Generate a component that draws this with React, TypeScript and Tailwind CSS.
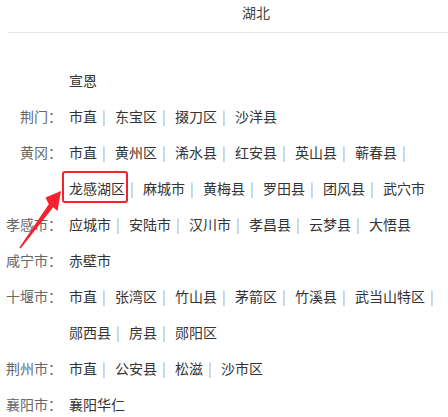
import React from "react";

type Row = { label: string; items: string[] };

const ROWS: Row[] = [
  { label: "", items: ["宣恩"] },
  { label: "荆门：", items: ["市直", "东宝区", "掇刀区", "沙洋县"] },
  {
    label: "黄冈：",
    items: ["市直", "黄州区", "浠水县", "红安县", "英山县", "蕲春县", "龙感湖区", "麻城市", "黄梅县", "罗田县", "团风县", "武穴市"],
  },
  { label: "孝感市：", items: ["应城市", "安陆市", "汉川市", "孝昌县", "云梦县", "大悟县"] },
  { label: "咸宁市：", items: ["赤壁市"] },
  {
    label: "十堰市：",
    items: ["市直", "张湾区", "竹山县", "茅箭区", "竹溪县", "武当山特区", "郧西县", "房县", "郧阳区"],
  },
  { label: "荆州市：", items: ["市直", "公安县", "松滋", "沙市区"] },
  { label: "襄阳市：", items: ["襄阳华仁"] },
];

const HIGHLIGHT = "龙感湖区";

export default function App() {
  return (
    <div
      className="relative w-[448px] h-[417px] overflow-hidden bg-white text-[14px] text-[#333]"
      style={{ fontFamily: '"Noto Sans CJK SC", "Noto Sans", sans-serif' }}
    >
      {/* header */}
      <div className="h-[25px] leading-[25px] pl-[242px] text-[#444]">湖北</div>
      <div className="ml-2 mt-[7px] border-t border-[#e6e6e6]" />

      {/* city rows */}
      <div className="pt-[29px]">
        {ROWS.map((row, i) => (
          <div key={i} className="flex leading-[36px]">
            <span className="w-[62px] shrink-0 text-right whitespace-nowrap text-[#666]">{row.label}</span>
            <div className="ml-[7px] flex flex-wrap">
              {row.items.map((name, j) => (
                <span key={name} className="flex whitespace-nowrap">
                  <span className="relative">
                    {name}
                    {name === HIGHLIGHT && (
                      <span className="absolute left-[-7px] right-[-3px] top-px bottom-[3px] rounded-[3px] border-2 border-[#f5222d]" />
                    )}
                  </span>
                  {j < row.items.length - 1 && (
                    <span className="w-[14px] mr-1 text-center text-[#aaa]">|</span>
                  )}
                </span>
              ))}
            </div>
          </div>
        ))}
      </div>

      {/* annotation arrow */}
      <svg
        className="absolute left-0 top-0 pointer-events-none"
        width="448"
        height="417"
        viewBox="0 0 448 417"
      >
        <polygon
          points="61,191 57.5,211 53.2,207.2 20.6,248.6 19.4,247.4 48.8,204.2 45.5,197.5"
          fill="#f5222d"
        />
      </svg>
    </div>
  );
}
